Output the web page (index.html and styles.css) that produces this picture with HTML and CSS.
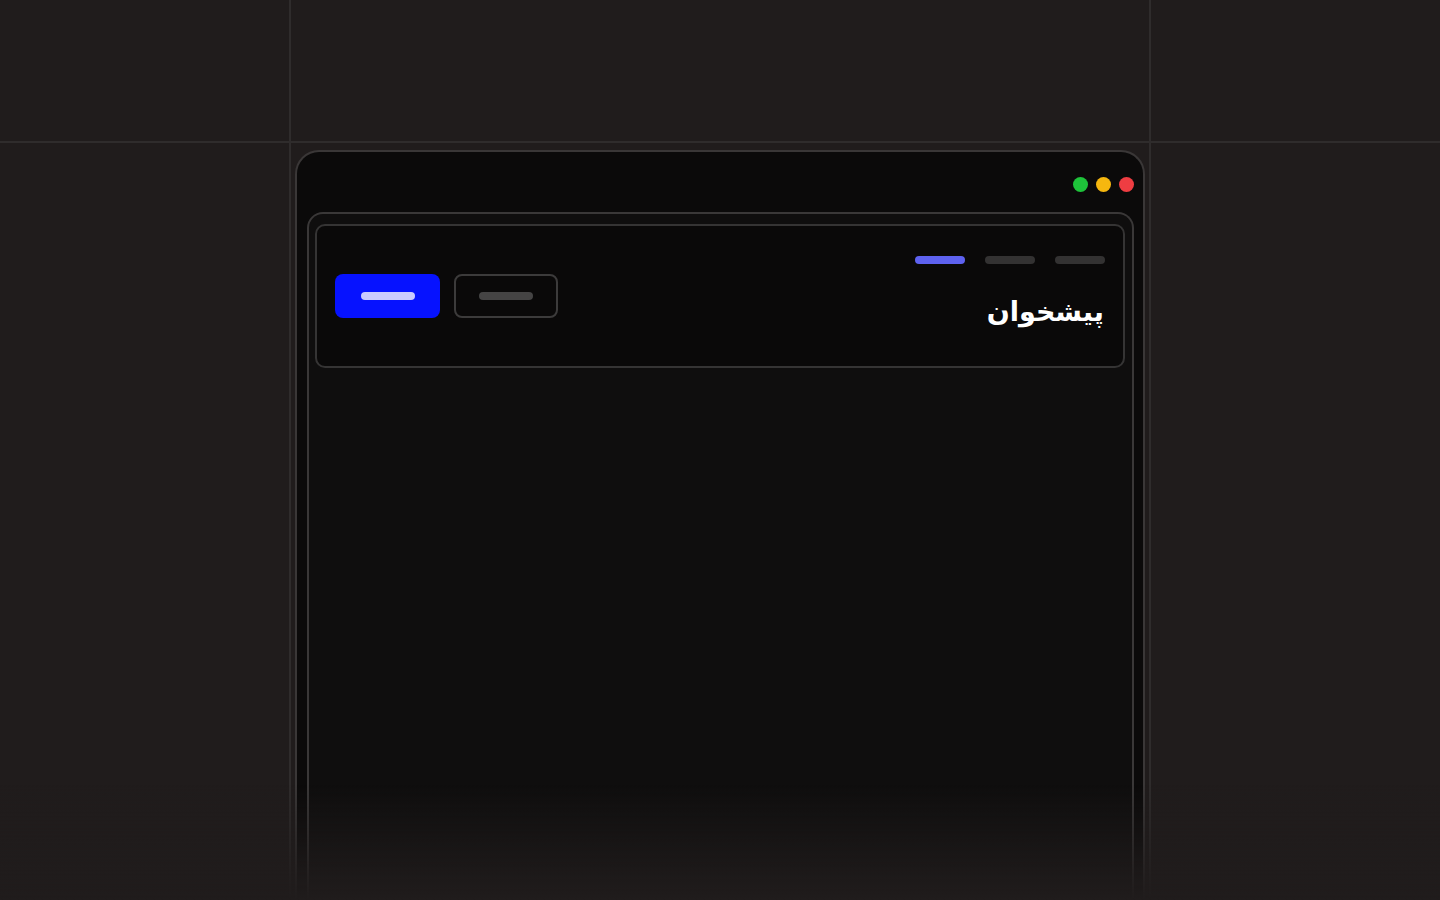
FILE: index.html
```html
<!DOCTYPE html>
<html lang="fa" dir="rtl">
<head>
<meta charset="utf-8">
<title>پیشخوان</title>
<link rel="stylesheet" href="styles.css">
</head>
<body>
<div class="stage">
  <div class="window">
    <div class="titlebar">
      <span class="dot dot-red"></span>
      <span class="dot dot-yellow"></span>
      <span class="dot dot-green"></span>
    </div>
    <div class="frame">
      <div class="header-card">
        <div class="heading">
          <div class="tabs">
            <span class="tab"></span>
            <span class="tab"></span>
            <span class="tab tab-active"></span>
          </div>
          <h1 class="title">پیشخوان</h1>
        </div>
        <div class="actions">
          <div class="btn btn-outline"><span class="btn-bar"></span></div>
          <div class="btn btn-primary"><span class="btn-bar"></span></div>
        </div>
      </div>
    </div>
  </div>
</div>
<div class="fade"></div>
</body>
</html>
```
FILE: styles.css
```css
html, body {
  margin: 0;
  padding: 0;
  height: 100%;
}
body {
  background-color: #201c1c;
  background-image:
    linear-gradient(to right, transparent 289px, #2f2c2c 289px, #2f2c2c 291px, transparent 291px),
    linear-gradient(to right, transparent 1149px, #2f2c2c 1149px, #2f2c2c 1151px, transparent 1151px),
    linear-gradient(to bottom, transparent 141px, #2f2c2c 141px, #2f2c2c 143px, transparent 143px);
  font-family: "DejaVu Sans", "Noto Sans", sans-serif;
  overflow: hidden;
}
.stage {
  display: flex;
  justify-content: center;
  padding-top: 150px;
  height: 750px;
}
.window {
  width: 850px;
  height: 100%;
  box-sizing: border-box;
  background: #0b0a0a;
  border: 2px solid #3a3737;
  border-bottom: none;
  border-radius: 24px 24px 0 0;
  padding: 0 9px 0 10px;
  display: flex;
  flex-direction: column;
}
.titlebar {
  height: 60px;
  display: flex;
  align-items: center;
  gap: 8px;
  padding-top: 4px;
  box-sizing: border-box;
}
.dot {
  width: 15px;
  height: 15px;
  border-radius: 50%;
}
.dot-red { background: #ef3d42; }
.dot-yellow { background: #f6b70f; }
.dot-green { background: #1ec33a; }
.frame {
  flex: 1;
  background: #0f0e0e;
  border: 2px solid #3a3838;
  border-bottom: none;
  border-radius: 16px 16px 0 0;
  padding: 10px 7px 0 6px;
}
.header-card {
  height: 144px;
  box-sizing: border-box;
  background: #0a0909;
  border: 2px solid #353434;
  border-radius: 10px;
  padding: 30px 18px 0 18px;
  display: flex;
  justify-content: space-between;
  align-items: flex-start;
}
.heading {
  display: flex;
  flex-direction: column;
  align-items: flex-start;
}
.tabs {
  display: flex;
  gap: 20px;
}
.tab {
  width: 50px;
  height: 8px;
  border-radius: 4px;
  background: #333232;
}
.tab-active {
  background: #5e62f0;
}
.title {
  margin: 28px 1px 0 0;
  font-size: 27px;
  line-height: 40px;
  font-weight: 700;
  color: #ffffff;
}
.actions {
  display: flex;
  gap: 14px;
  margin-top: 18px;
}
.btn {
  width: 105px;
  height: 44px;
  box-sizing: border-box;
  border-radius: 8px;
  display: flex;
  align-items: center;
  justify-content: center;
}
.btn-primary {
  background: #0612ff;
}
.btn-primary .btn-bar {
  background: #c9caff;
}
.btn-outline {
  border: 2px solid #3c3b3b;
  width: 104px;
}
.btn-outline .btn-bar {
  background: #454444;
}
.btn-bar {
  width: 54px;
  height: 8px;
  border-radius: 4px;
}
.fade {
  position: fixed;
  left: 0;
  right: 0;
  bottom: 0;
  height: 115px;
  background: linear-gradient(to bottom, rgba(32, 28, 28, 0) 0%, rgba(32, 28, 28, 0.85) 80%, #201c1c 100%);
  pointer-events: none;
}
```
